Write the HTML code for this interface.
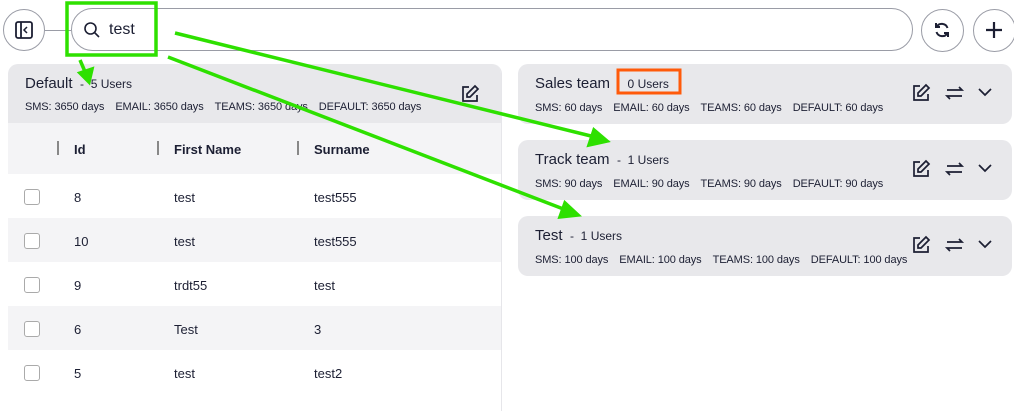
<!DOCTYPE html><html><head><style>
body{margin:0;width:1014px;height:411px;overflow:hidden;background:#fff;font-family:"Liberation Sans",sans-serif;color:#1c1f33;position:relative}
.a{position:absolute}
.circ{position:absolute;border:1px solid #9a9ca6;border-radius:50%;background:#fff;box-sizing:border-box}
.card{position:absolute;left:518px;width:494px;height:60px;background:#e8e8eb;border-radius:10px}
.t{position:absolute;left:17px;top:11px;font-size:15px;color:#1c1f33;white-space:nowrap}
.t small{font-size:12px}
.d{position:absolute;left:17px;top:38px;font-size:11px;letter-spacing:-.1px;white-space:nowrap}
.d span{margin-right:11px}
.row{position:absolute;left:8px;width:493px;height:44px;font-size:13px}
.row div{position:absolute;top:16px}
.cb{width:14px;height:14px;border:1px solid #aaa;border-radius:3px;left:16px;top:15px!important;background:#fff}
</style></head><body>
<div class="circ" style="left:3px;top:9px;width:42px;height:42px"></div>
<svg class="a" style="left:14px;top:20px" width="20" height="20" viewBox="0 0 20 20"><rect x="2" y="2" width="16" height="16" rx="2" fill="none" stroke="#1c1f33" stroke-width="1.8"/><line x1="7" y1="2" x2="7" y2="18" stroke="#1c1f33" stroke-width="1.8"/><path d="M13 7l-3 3 3 3" fill="none" stroke="#1c1f33" stroke-width="1.5"/></svg>
<div class="a" style="left:45px;top:30px;width:26px;height:1px;background:#9a9ca6"></div>
<div class="a" style="left:71px;top:8px;width:842px;height:43px;border:1px solid #9a9ca6;border-radius:22px;box-sizing:border-box"></div>
<svg class="a" style="left:83px;top:21px" width="18" height="18" viewBox="0 0 18 18"><circle cx="7.5" cy="7.5" r="5.5" fill="none" stroke="#1c1f33" stroke-width="1.6"/><line x1="11.5" y1="11.5" x2="16" y2="16" stroke="#1c1f33" stroke-width="1.6"/></svg>
<div class="a" style="left:109px;top:21px;font-size:16px">test</div>
<div class="circ" style="left:921px;top:9px;width:43px;height:43px"></div>
<svg class="a" style="left:932px;top:20px" width="20" height="20" viewBox="0 0 20 20" fill="none" stroke="#1c1f33" stroke-width="2"><path d="M15.5 8A6 6 0 0 0 4.5 7M4.5 12a6 6 0 0 0 11 1"/><path d="M4 3v4h4M16 17v-4h-4"/></svg>
<div class="circ" style="left:973px;top:9px;width:43px;height:43px"></div>
<svg class="a" style="left:984px;top:20px" width="20" height="20"><path d="M10 2v16M2 10h16" stroke="#1c1f33" stroke-width="2.2"/></svg>

<div class="a" style="left:8px;top:64px;width:493px;height:347px;background:#fff;border-radius:10px 10px 0 0;overflow:hidden;border-right:1px solid #e6e6ea">
<div class="a" style="left:0;top:0;width:493px;height:59px;background:#e8e8eb"></div>
<div class="t" style="left:17px;top:11px">Default <small>&nbsp;- &nbsp;5 Users</small></div>
<div class="d" style="top:37px"><span>SMS: 3650 days</span><span>EMAIL: 3650 days</span><span>TEAMS: 3650 days</span><span>DEFAULT: 3650 days</span></div>
<svg class="a" style="left:452px;top:20px" width="20" height="20" viewBox="0 0 20 20" fill="none" stroke="#1c1f33" stroke-width="1.7"><path d="M9 3H3v14h14v-6"/><path d="M15 2l3 3-8 8H7v-3z"/></svg>
<div class="a" style="left:0;top:59px;width:493px;height:51px;background:#f4f4f6;font-size:13px;font-weight:bold">
<div class="a" style="left:49px;top:18px;width:2px;height:14px;background:#888"></div><div class="a" style="left:66px;top:19px">Id</div>
<div class="a" style="left:149px;top:18px;width:2px;height:14px;background:#888"></div><div class="a" style="left:166px;top:19px">First Name</div>
<div class="a" style="left:289px;top:18px;width:2px;height:14px;background:#888"></div><div class="a" style="left:306px;top:19px">Surname</div>
</div>
</div>
<div class="row" style="top:174px"><div class="cb"></div><div style="left:66px">8</div><div style="left:166px">test</div><div style="left:306px">test555</div></div>
<div class="row" style="top:218px;background:#f4f4f6"><div class="cb"></div><div style="left:66px">10</div><div style="left:166px">test</div><div style="left:306px">test555</div></div>
<div class="row" style="top:262px"><div class="cb"></div><div style="left:66px">9</div><div style="left:166px">trdt55</div><div style="left:306px">test</div></div>
<div class="row" style="top:306px;background:#f4f4f6"><div class="cb"></div><div style="left:66px">6</div><div style="left:166px">Test</div><div style="left:306px">3</div></div>
<div class="row" style="top:350px"><div class="cb"></div><div style="left:66px">5</div><div style="left:166px">test</div><div style="left:306px">test2</div></div>

<div class="card" style="top:64px"><div class="t">Sales team <small>&nbsp;&nbsp;&nbsp;&nbsp;0 Users</small></div><div class="d"><span>SMS: 60 days</span><span>EMAIL: 60 days</span><span>TEAMS: 60 days</span><span>DEFAULT: 60 days</span></div></div>
<div class="card" style="top:140px"><div class="t">Track team <small>&nbsp;- &nbsp;1 Users</small></div><div class="d"><span>SMS: 90 days</span><span>EMAIL: 90 days</span><span>TEAMS: 90 days</span><span>DEFAULT: 90 days</span></div></div>
<div class="card" style="top:216px"><div class="t">Test <small>&nbsp;- &nbsp;1 Users</small></div><div class="d"><span>SMS: 100 days</span><span>EMAIL: 100 days</span><span>TEAMS: 100 days</span><span>DEFAULT: 100 days</span></div></div>

<svg class="a" style="left:0;top:0" width="1014" height="411" fill="none">
<g stroke="#1c1f33" stroke-width="1.7">
<g id="ic"><path d="M920 86h-6v14h14v-6"/><path d="M926 85l3 3-8 8h-3v-3z"/><path d="M947 90h15l-3-3M962 96h-15l3 3"/><path d="M979 89l6 6 6-6"/></g>
<use href="#ic" y="76"/><use href="#ic" y="152"/>
</g>
<rect x="618" y="70" width="62" height="23" stroke="#ff5a0a" stroke-width="3"/>
<rect x="67" y="3" width="89" height="52" stroke="#2ee000" stroke-width="3.5"/>
<g stroke="#2ee000" stroke-width="3.5" fill="#2ee000">
<line x1="175" y1="33" x2="595" y2="137"/><path d="M607 141l-18 4 5-15z"/>
<line x1="168" y1="57" x2="566" y2="210"/><path d="M578 215l-18 2 5-14z"/>
<line x1="80" y1="60" x2="86" y2="74"/><path d="M89 82l-9-9 12-4z"/>
</g>
</svg>
</body></html>
